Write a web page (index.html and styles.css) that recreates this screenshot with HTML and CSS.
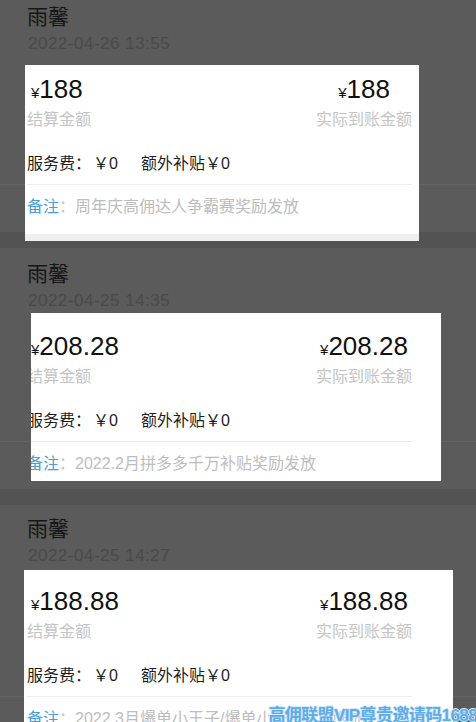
FILE: index.html
```html
<!DOCTYPE html>
<html lang="zh-CN">
<head>
<meta charset="UTF-8" />
<meta name="viewport" content="width=device-width, initial-scale=1" />
<title>收益明细</title>
<link rel="stylesheet" href="styles.css">
</head>
<body>
<main class="list">
  <section class="record record-1">
    <h2 class="record-name">雨馨</h2>
    <p class="record-time">2022-04-26 13:55</p>
    <div class="record-card">
      <div class="record-body">
        <div class="amounts">
          <div class="amount-col">
            <div class="amount"><span class="yen">¥</span>188</div>
            <div class="amount-label">结算金额</div>
          </div>
          <div class="amount-col amount-col-right">
            <div class="amount"><span class="yen">¥</span>188</div>
            <div class="amount-label">实际到账金额</div>
          </div>
        </div>
        <div class="fees"><span>服务费：</span><span class="fee-val">￥0</span><span class="fee-extra">额外补贴</span><span>￥0</span></div>
        <div class="remark"><span class="remark-key">备注</span><span class="remark-colon">：</span>周年庆高佣达人争霸赛奖励发放</div>
      </div>
    </div>
  </section>

  <section class="record record-2">
    <h2 class="record-name">雨馨</h2>
    <p class="record-time">2022-04-25 14:35</p>
    <div class="record-card">
      <div class="record-body">
        <div class="amounts">
          <div class="amount-col">
            <div class="amount"><span class="yen">¥</span>208.28</div>
            <div class="amount-label">结算金额</div>
          </div>
          <div class="amount-col amount-col-right">
            <div class="amount"><span class="yen">¥</span>208.28</div>
            <div class="amount-label">实际到账金额</div>
          </div>
        </div>
        <div class="fees"><span>服务费：</span><span class="fee-val">￥0</span><span class="fee-extra">额外补贴</span><span>￥0</span></div>
        <div class="remark"><span class="remark-key">备注</span><span class="remark-colon">：</span>2022.2月拼多多千万补贴奖励发放</div>
      </div>
    </div>
  </section>

  <section class="record record-3">
    <h2 class="record-name">雨馨</h2>
    <p class="record-time">2022-04-25 14:27</p>
    <div class="record-card">
      <div class="record-body">
        <div class="amounts">
          <div class="amount-col">
            <div class="amount"><span class="yen">¥</span>188.88</div>
            <div class="amount-label">结算金额</div>
          </div>
          <div class="amount-col amount-col-right">
            <div class="amount"><span class="yen">¥</span>188.88</div>
            <div class="amount-label">实际到账金额</div>
          </div>
        </div>
        <div class="fees"><span>服务费：</span><span class="fee-val">￥0</span><span class="fee-extra">额外补贴</span><span>￥0</span></div>
        <div class="remark"><span class="remark-key">备注</span><span class="remark-colon">：</span>2022.3月爆单小王子/爆单小王子奖励发放</div>
      </div>
    </div>
  </section>
</main>

<div class="watermark">高佣联盟VIP尊贵邀请码1688</div>
</body>
</html>
```

FILE: styles.css
```css
* { box-sizing: border-box; }
html, body {
  margin: 0; padding: 0;
}
body {
  width: 476px;
  height: 722px;
  overflow: hidden;
  position: relative;
  background: #5b5b5b;
  font-family: "Liberation Sans", "Noto Sans CJK SC", sans-serif;
}

/* each record is one dimmed list item; the white card is the highlighted part */
.record {
  --top: 13px;
  --card-left: 25px;
  --card-width: 394px;
  --card-gap: 11px;
  --card-pb: 20px;
  height: 257px;
  padding-top: var(--top);
  background:
    linear-gradient(#636363, #636363) 0 calc(var(--top) + 180px) / 100% 1px no-repeat,
    linear-gradient(to top, #535353 16px, #5b5b5b 16px);
}
.record-1 {
  --top: 4px;
  --card-left: 25px;
  --card-width: 394px;
  --card-gap: 11px;
  --card-pb: 23px;
  height: 248px;
}
.record-2 {
  --top: 13px;
  --card-left: 31px;
  --card-width: 410px;
  --card-gap: 2px;
  --card-pb: 6px;
}
.record-3 {
  --top: 11px;
  --card-left: 24px;
  --card-width: 429px;
  --card-gap: 4px;
}

.record-name {
  margin: 0 0 0 27px;
  font-size: 21px;
  line-height: 26px;
  font-weight: normal;
  color: #161616;
}
.record-time {
  margin: 4px 0 0 28px;
  font-size: 17px;
  line-height: 20px;
  letter-spacing: 0.5px;
  color: #4a4a4a;
}

.record-card {
  margin: var(--card-gap) 0 0 var(--card-left);
  width: var(--card-width);
  padding: calc(20px - var(--card-gap)) 0 var(--card-pb);
  background: #fff;
  overflow: hidden;
}
.record-1 .record-card {
  background: linear-gradient(to top, #efefef 7px, #fff 7px);
}
.record-body {
  margin-left: calc(27px - var(--card-left));
  padding-right: calc(var(--card-left) + var(--card-width) - 412px);
}

.amounts {
  display: flex;
  justify-content: space-between;
}
.amount {
  font-size: 26px;
  line-height: 30px;
  color: #111;
}
.amount-col:first-child .amount {
  padding-left: 4px;
}
.amount-col-right {
  text-align: center;
}
.yen {
  font-size: 15px;
}
.amount-label {
  margin-top: 1px;
  font-size: 16px;
  line-height: 22px;
  color: #c4c4c4;
}

.fees {
  margin-top: 22px;
  font-size: 16px;
  line-height: 22px;
  color: #1d1d1d;
}
.fee-val { margin-left: 2px; }
.fee-extra { margin-left: 23px; }

.remark {
  margin-top: 9px;
  border-top: 1px solid #ececec;
  padding-top: 11px;
  font-size: 16px;
  line-height: 22px;
  color: #bdbdbd;
  white-space: nowrap;
}
.remark-key { color: #4a9ddb; }

.watermark {
  position: absolute;
  right: -1px;
  bottom: -4px;
  font-size: 17px;
  font-weight: bold;
  line-height: 20px;
  letter-spacing: -0.6px;
  color: #5fabe8;
  text-shadow: 1px 0 #d4e9f9, -1px 0 #d4e9f9, 0 1px #d4e9f9, 0 -1px #d4e9f9;
}
```
